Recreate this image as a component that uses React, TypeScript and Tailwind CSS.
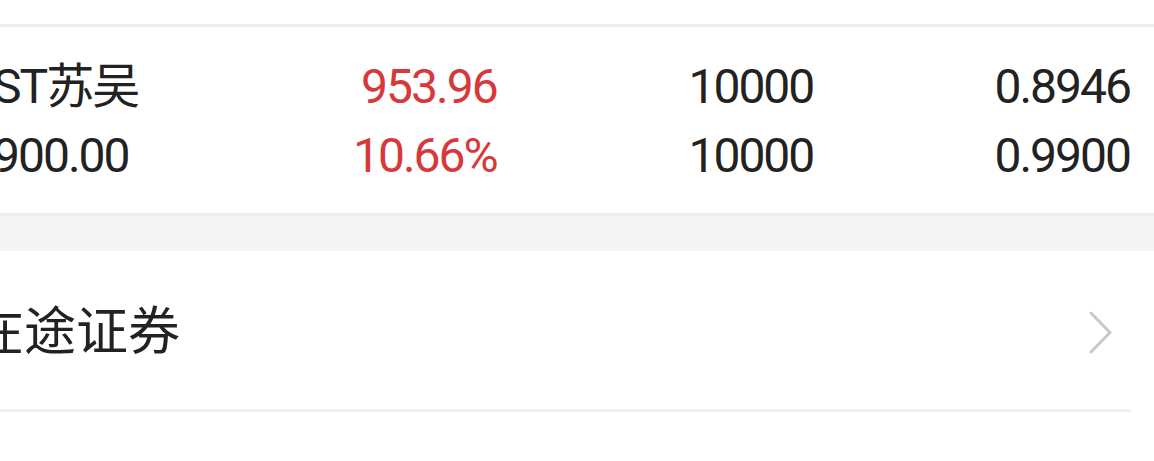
import React from 'react';

const rows = [
  { name: 'ST苏吴', price: '953.96', qty: '10000', ratio: '0.8946' },
  { name: '900.00', price: '10.66%', qty: '10000', ratio: '0.9900' },
];

export default function App() {
  return (
    <div className="w-[1154px] h-[461px] overflow-hidden bg-white text-[#222222]" style={{ fontFamily: 'Roboto, "Noto Sans CJK SC", sans-serif' }}>
      <div className="h-[24px]" />

      {/* position row */}
      <div className="border-t-[3px] border-b-[3px] border-[#ededed] pt-[25px] pb-[23px]">
        <div className="-ml-[7px] pr-[24px] grid grid-cols-[187px_1fr_1fr_1fr] text-[48px] leading-[69px] tracking-[-2px]">
          {rows.map((r, i) => (
            <React.Fragment key={i}>
              <div className="whitespace-nowrap">{r.name}</div>
              <div className="text-right text-[#d7393b]">{r.price}</div>
              <div className="text-right">{r.qty}</div>
              <div className="text-right">{r.ratio}</div>
            </React.Fragment>
          ))}
        </div>
      </div>

      <div className="h-[35px] bg-[#f5f5f5]" />

      <div className="mr-[23px] border-b-[3px] border-[#f0f0f0]">
        <div className="h-[158px] flex items-center justify-between -ml-[28px] pr-[18px]">
          <span className="text-[52px] leading-none pb-[4px]" style={{ fontFamily: '"Noto Sans CJK SC", sans-serif' }}>
            在途证券
          </span>
          <svg width="24" height="43" viewBox="0 0 24 43" className="mt-[5px]" fill="none">
            <polyline points="2,2 21,21.5 2,41" stroke="#c8c8c8" strokeWidth="3" strokeLinecap="round" strokeLinejoin="round" />
          </svg>
        </div>
      </div>
    </div>
  );
}
